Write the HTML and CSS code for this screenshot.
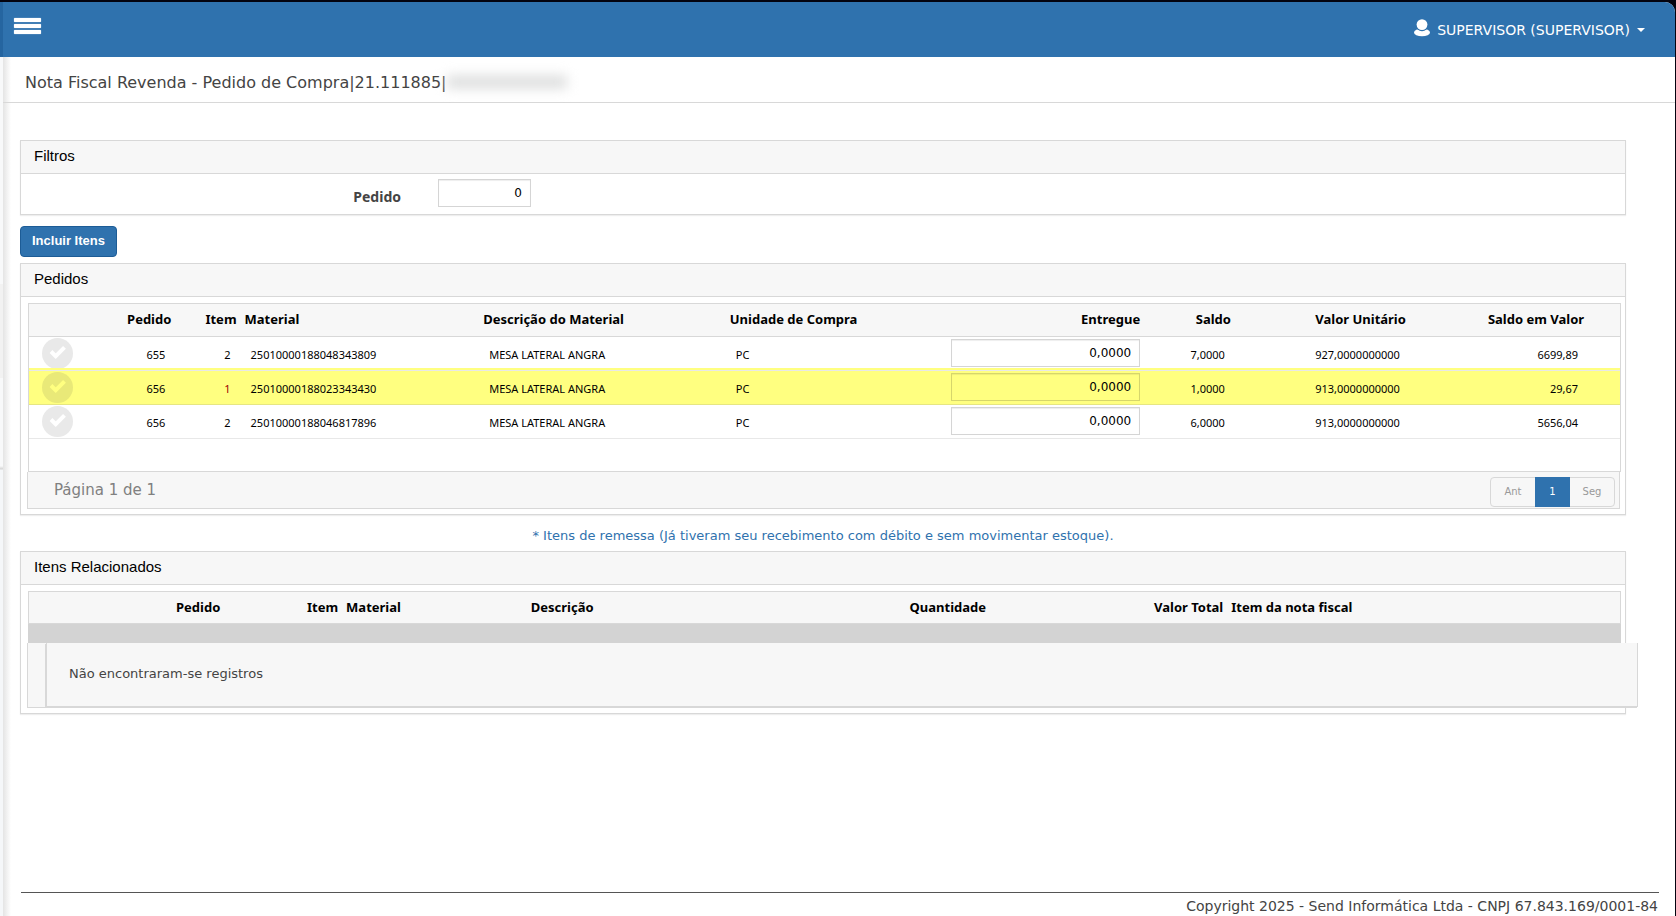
FILE: index.html
```html
<!DOCTYPE html>
<html lang="pt-BR">
<head>
<meta charset="utf-8">
<title>Nota Fiscal Revenda - Pedido de Compra</title>
<link rel="stylesheet" href="styles.css">
</head>
<body>
<div class="frame">
  <aside class="side-edge"><span class="side-top"></span><span class="side-body"></span></aside>
  <div class="page">
    <header class="topbar">
      <button class="menu-btn" aria-label="Menu"><span></span><span></span><span></span></button>
      <button class="user-btn">
        <svg class="user-icon" viewBox="0 0 16 18" aria-hidden="true"><ellipse cx="8" cy="13.5" rx="8" ry="3.8"/><circle cx="8" cy="5.8" r="6.4" fill="#2f72ae"/><circle cx="8" cy="5.6" r="5.4"/></svg>
        <span>SUPERVISOR (SUPERVISOR)</span>
        <svg class="caret" viewBox="0 0 8 4" aria-hidden="true"><path d="M0 0h8L4 4z"/></svg>
      </button>
    </header>
    <h1 class="title"><span>Nota Fiscal Revenda - Pedido de Compra|21.111885|</span><span class="redacted"></span></h1>

    <main class="content">
      <section class="panel">
        <h2 class="panel-title">Filtros</h2>
        <div class="filter-row">
          <label for="pedido">Pedido</label>
          <input class="field" id="pedido" type="text" value="0">
        </div>
      </section>

      <button class="primary">Incluir Itens</button>

      <section class="panel">
        <h2 class="panel-title">Pedidos</h2>
        <div class="panel-body">
          <div class="orders-box">
            <table class="grid orders">
              <colgroup><col class="o1"><col class="o2"><col class="o3"><col class="o4"><col class="o5"><col class="o6"><col class="o7"><col class="o8"><col class="o9"><col class="o10"><col></colgroup>
              <thead>
                <tr><th></th><th class="num">Pedido</th><th class="num">Item</th><th>Material</th><th>Descrição do Material</th><th>Unidade de Compra</th><th class="num">Entregue</th><th class="num">Saldo</th><th class="num">Valor Unitário</th><th class="num">Saldo em Valor</th><th></th></tr>
              </thead>
              <tbody>
                <tr>
                  <td class="pick"><button class="check" aria-label="Selecionar item"><svg viewBox="0 0 31 31"><path d="M9 13.5l4.7 4.7 8.8-8.8"/></svg></button></td>
                  <td class="num">655</td><td class="num">2</td><td>25010000188048343809</td><td>MESA LATERAL ANGRA</td><td>PC</td>
                  <td class="edit"><input class="field" type="text" value="0,0000" aria-label="Entregue"></td>
                  <td class="num">7,0000</td><td class="num">927,0000000000</td><td class="num">6699,89</td><td></td>
                </tr>
                <tr class="marked">
                  <td class="pick"><button class="check" aria-label="Selecionar item"><svg viewBox="0 0 31 31"><path d="M9 13.5l4.7 4.7 8.8-8.8"/></svg></button></td>
                  <td class="num">656</td><td class="num alert">1</td><td>25010000188023343430</td><td>MESA LATERAL ANGRA</td><td>PC</td>
                  <td class="edit"><input class="field" type="text" value="0,0000" aria-label="Entregue"></td>
                  <td class="num">1,0000</td><td class="num">913,0000000000</td><td class="num">29,67</td><td></td>
                </tr>
                <tr>
                  <td class="pick"><button class="check" aria-label="Selecionar item"><svg viewBox="0 0 31 31"><path d="M9 13.5l4.7 4.7 8.8-8.8"/></svg></button></td>
                  <td class="num">656</td><td class="num">2</td><td>25010000188046817896</td><td>MESA LATERAL ANGRA</td><td>PC</td>
                  <td class="edit"><input class="field" type="text" value="0,0000" aria-label="Entregue"></td>
                  <td class="num">6,0000</td><td class="num">913,0000000000</td><td class="num">5656,04</td><td></td>
                </tr>
              </tbody>
            </table>
          </div>
          <div class="pager">
            <span>Página 1 de 1</span>
            <nav class="pages" aria-label="Paginação"><button>Ant</button><button class="current">1</button><button>Seg</button></nav>
          </div>
        </div>
      </section>

      <p class="note">* Itens de remessa (Já tiveram seu recebimento com débito e sem movimentar estoque).</p>

      <section class="panel">
        <h2 class="panel-title">Itens Relacionados</h2>
        <div class="panel-body">
          <table class="grid related">
            <colgroup><col class="r1"><col class="r2"><col class="r3"><col class="r4"><col class="r5"><col class="r6"><col></colgroup>
            <thead>
              <tr><th class="num">Pedido</th><th class="num">Item</th><th>Material</th><th>Descrição</th><th class="num">Quantidade</th><th class="num">Valor Total</th><th>Item da nota fiscal</th></tr>
            </thead>
          </table>
          <div class="band"></div>
          <div class="empty-wrap"><p class="empty">Não encontraram-se registros</p></div>
        </div>
      </section>
    </main>

    <footer class="footer">Copyright 2025 - Send Informática Ltda - CNPJ 67.843.169/0001-84</footer>
  </div>
</div>
</body>
</html>
```
FILE: styles.css
```css
* { box-sizing: border-box; }
body {
  margin: 0;
  background: #03030f;
  color: #444;
  font-family: Verdana, "DejaVu Sans", sans-serif;
  font-size: 13px;
}
h1, h2, p { margin: 0; font-weight: normal; }
button { font: inherit; cursor: pointer; }

.frame {
  display: flex;
  min-height: 100vh;
  padding: 2px 1px 0 0;
}
.side-edge { display: flex; flex-direction: column; width: 3px; }
.side-top { height: 55px; background: #2565a0; }
.side-body {
  flex: 1;
  background: linear-gradient(#f8f9fa 227px, #f2f2f2 227px, #f2f2f2 321px, #f8f9fa 321px, #f8f9fa 409px, #d4d4d4 412px, #f5f7f9 413px);
}
.page {
  flex: 1;
  min-width: 0;
  display: flex;
  flex-direction: column;
  background: linear-gradient(to right, #e4e4e4, #fff 8px);
  border-radius: 0 10px 0 0;
  overflow: hidden;
}

.topbar {
  display: flex;
  justify-content: space-between;
  align-items: center;
  height: 55px;
  padding: 0 30px 0 11px;
  background: #2f72ae;
}
.menu-btn {
  display: flex;
  flex-direction: column;
  gap: 2px;
  width: 27px;
  margin-bottom: 8px;
  padding: 0;
  border: 0;
  background: none;
}
.menu-btn span { height: 4px; border-radius: 1px; background: #fff; box-shadow: 0 0 1px #fff; }
.user-btn {
  display: flex;
  align-items: center;
  gap: 7px;
  padding: 0;
  border: 0;
  background: none;
  color: #fff;
  font-size: 14px;
}
.user-icon { width: 16px; height: 18px; margin-bottom: 4px; fill: #fff; }
.caret { width: 8px; height: 4px; fill: #fff; }

.title {
  display: flex;
  align-items: center;
  height: 46px;
  padding: 5px 22px 0;
  border-bottom: 1px solid #d8d8d8;
  font-size: 16px;
}
.redacted {
  width: 120px;
  height: 14px;
  background: #dfe0e0;
  filter: blur(6px);
}

.content {
  display: flex;
  flex-direction: column;
  align-items: flex-start;
  padding: 37px 49px 0 17px;
}
.panel {
  width: 100%;
  border: 1px solid #d8d8d8;
  background: #fff;
  box-shadow: 0 1px 1px #eee;
}
.panel-title {
  height: 33px;
  padding: 0 13px;
  border-bottom: 1px solid #d8d8d8;
  background: #f7f7f7;
  color: #000;
  font: 15px/30px "Liberation Sans", Arial, sans-serif;
}
.field {
  height: 28px;
  border: 1px solid #d5d5d5;
  box-shadow: inset 0 1px 1px #eee;
  background: #fff;
  color: #000;
  padding: 0 8px;
  font: 12px "DejaVu Sans", sans-serif;
  text-align: right;
}
.filter-row { display: flex; height: 40px; padding-top: 5px; }
.filter-row label {
  width: 380px;
  padding-top: 8px;
  font: bold 14px/20px "Noto Sans", sans-serif;
  text-align: right;
}
.filter-row .field { width: 93px; margin-left: 37px; }

.primary {
  height: 31px;
  margin: 11px 0 6px;
  padding: 0 11px 3px;
  border: 1px solid #1d5c96;
  border-radius: 4px;
  background: #2f72ae;
  color: #fff;
  font: bold 13px "Liberation Sans", Arial, sans-serif;
}

.panel-body { padding: 6px 4px 5px 6px; }
.orders-box {
  min-height: 169px;
  margin-left: 1px;
  border: 1px solid #d8d8d8;
}
.grid {
  width: 100%;
  table-layout: fixed;
  border-collapse: collapse;
  color: #000;
}
.grid th {
  height: 32px;
  padding: 0 4px 1px;
  border-bottom: 1px solid #d8d8d8;
  background: #f7f7f7;
  font: bold 13px "Noto Sans", sans-serif;
  text-align: left;
  white-space: nowrap;
}
.grid td {
  height: 34px;
  padding: 2px 10px 0;
  border-bottom: 1px solid #e8e8e8;
  font: 11px "Noto Sans", sans-serif;
}
.grid .num { text-align: right; }
.grid .pick { padding: 0 0 0 13px; }
.grid .edit { padding: 0 4px; text-align: right; }
.grid .edit .field { display: block; width: 189px; margin-left: auto; }
.grid .alert { color: #a00000; }
.o1 { width: 4%; }
.o2 { width: 5.2%; }
.o3 { width: 4.1%; }
.o4 { width: 15%; }
.o5 { width: 15.5%; }
.o6 { width: 13.9%; }
.o7 { width: 12.4%; }
.o8 { width: 5.7%; }
.o9 { width: 11%; }
.o10 { width: 11.2%; }

.marked td { background: #ffff80; border-color: #e6e682; box-shadow: 0 -2px #ffff80; }
.marked .field { background: #ffff80; border-color: #d6d66c; box-shadow: inset 0 1px 1px #eeee78; }
.check {
  display: block;
  width: 31px;
  height: 31px;
  padding: 0;
  border: 0;
  border-radius: 50%;
  background: #e9e9e9;
}
.check svg { display: block; fill: none; stroke: #fff; stroke-width: 4; }
.marked .check { background: #e9e978; }
.marked .check svg { stroke: #ffff80; }

.pager {
  display: flex;
  justify-content: space-between;
  align-items: flex-start;
  height: 37px;
  margin-right: 1px;
  padding: 0 4px 0 26px;
  border: 1px solid #d8d8d8;
  border-top: 0;
  background: #f7f7f7;
  color: #808080;
  font-size: 15px;
  line-height: 36px;
}
.pages { display: flex; height: 30px; margin-top: 5px; border: 1px solid #d8d8d8; border-radius: 4px; }
.pages button {
  width: 44px;
  padding: 0;
  border: 0;
  background: none;
  color: #999;
  font-size: 10px;
  line-height: 28px;
}
.pages .current { width: 35px; margin: -1px 0; background: #2f72ae; color: #fff; }

.note {
  align-self: center;
  padding: 12px 0 6px;
  color: #2f72ae;
  line-height: 18px;
}

.related { width: calc(100% - 1px); margin-left: 1px; border: 1px solid #d8d8d8; border-bottom: 0; }
.r1 { width: 12.3%; }
.r2 { width: 7.4%; }
.r3 { width: 11.6%; }
.r4 { width: 14.3%; }
.r5 { width: 14.8%; }
.r6 { width: 14.9%; }
.band { height: 19px; margin-left: 1px; background: #d3d3d3; }
.empty-wrap {
  height: 65px;
  margin-right: 1px;
  border: 1px solid #d8d8d8;
  border-width: 0 0 1px 1px;
  background: #f7f7f7;
}
.empty {
  height: 64px;
  margin: 0 -18px 0 18px;
  padding: 22px 22px 0;
  border: 1px solid #d8d8d8;
  border-top: 0;
  background: #f7f7f7;
  box-shadow: -1px 1px #d8d8d8;
  line-height: 18px;
}

.footer {
  margin: auto 16px 0 18px;
  padding: 4px 1px 0;
  border-top: 1px solid #555;
  font-size: 14px;
  line-height: 19px;
  text-align: right;
}
```
